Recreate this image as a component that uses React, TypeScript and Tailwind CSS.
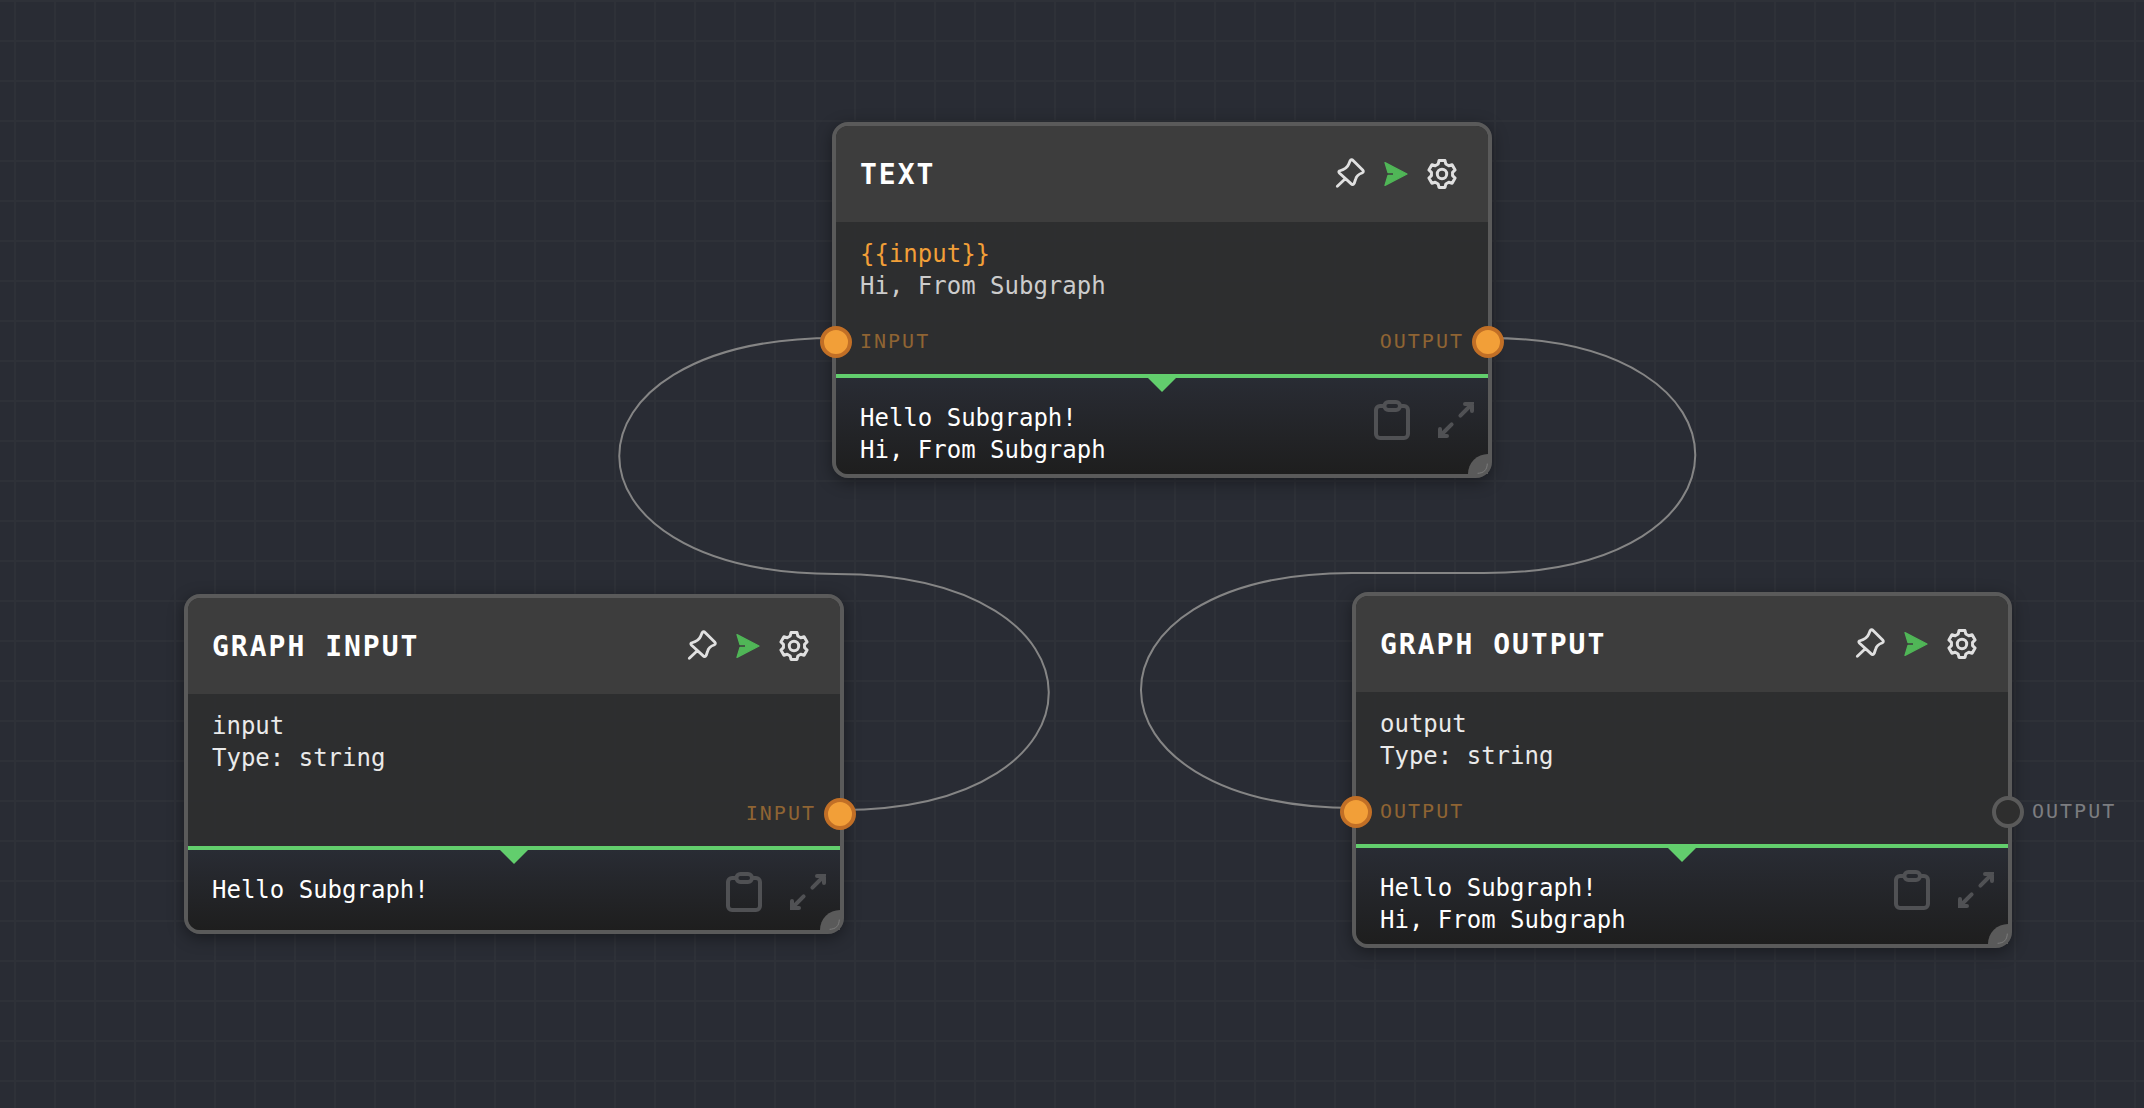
import React from "react";

type Line = { text: string; className: string };
type Port = { label: string; connected: boolean; outside?: boolean };
type NodeData = {
  id: string;
  title: string;
  place: string;
  body: Line[];
  input?: Port;
  output?: Port;
  result: string[];
};

const nodes: NodeData[] = [
  {
    id: "text",
    title: "Text",
    place: "left-[832px] top-[122px]",
    body: [
      { text: "{{input}}", className: "text-[#f29f38]" },
      { text: "Hi, From Subgraph", className: "text-[#cccccc]" },
    ],
    input: { label: "Input", connected: true },
    output: { label: "Output", connected: true },
    result: ["Hello Subgraph!", "Hi, From Subgraph"],
  },
  {
    id: "graph-input",
    title: "Graph Input",
    place: "left-[184px] top-[594px]",
    body: [
      { text: "input", className: "text-[#eaeaea]" },
      { text: "Type: string", className: "text-[#eaeaea]" },
    ],
    output: { label: "Input", connected: true },
    result: ["Hello Subgraph!"],
  },
  {
    id: "graph-output",
    title: "Graph Output",
    place: "left-[1352px] top-[592px]",
    body: [
      { text: "output", className: "text-[#eaeaea]" },
      { text: "Type: string", className: "text-[#eaeaea]" },
    ],
    input: { label: "Output", connected: true },
    output: { label: "Output", connected: false, outside: true },
    result: ["Hello Subgraph!", "Hi, From Subgraph"],
  },
];

const wires = [
  "M840 810C1119 810 1119 574 836 574C547 574 547 338 836 338",
  "M1488 338C1765 338 1765 573 1484 573H1352C1070 573 1070 808 1356 808",
];

function gearPath() {
  const tooth = [
    [-3.8, -10],
    [-3, -13.4],
    [3, -13.4],
    [3.8, -10],
  ];
  const points: string[] = [];
  for (let i = 0; i < 6; i++) {
    const a = (i * Math.PI) / 3;
    for (const [x, y] of tooth) {
      const px = 16 + x * Math.cos(a) - y * Math.sin(a);
      const py = 16 + x * Math.sin(a) + y * Math.cos(a);
      points.push(`${px.toFixed(2)} ${py.toFixed(2)}`);
    }
  }
  return `M${points.join("L")}Z`;
}

function PinIcon() {
  return (
    <svg viewBox="43 54 96 96" className="size-8" fill="none" stroke="currentColor" strokeWidth="8.5" strokeLinecap="round" strokeLinejoin="round">
      <path d="M53 139L76 117M59 93C70 90 83 84 87 73L91 63Q95 56 101 62L129 90Q134 96 127 99C115 103 111 107 108 117L104 129Q100 137 94 131L59 99Q56 95 59 93Z" />
    </svg>
  );
}

function SendIcon() {
  return (
    <svg viewBox="180 54 96 96" className="size-8" fill="currentColor" stroke="currentColor" strokeWidth="4" strokeLinejoin="round">
      <path d="M195 68L261 102L195 136L204 106H221V98H204Z" />
    </svg>
  );
}

function GearIcon() {
  return (
    <svg viewBox="0 0 32 32" className="size-8" fill="none" stroke="currentColor" strokeWidth="3" strokeLinejoin="round">
      <path d={gearPath()} />
      <circle cx="16" cy="16" r="4.7" />
    </svg>
  );
}

function ClipboardIcon() {
  return (
    <svg viewBox="0 0 24 24" className="size-12" fill="none" stroke="currentColor" strokeWidth="2" strokeLinejoin="round">
      <path d="M8.2 5H6a2 2 0 0 0-2 2V19a2 2 0 0 0 2 2H18a2 2 0 0 0 2-2V7a2 2 0 0 0-2-2H15.8" />
      <rect x="8.2" y="3" width="7.8" height="4" rx="2" />
    </svg>
  );
}

function ExpandIcon() {
  return (
    <svg viewBox="0 0 24 24" className="size-12" fill="none" stroke="currentColor" strokeWidth="2" strokeLinecap="round" strokeLinejoin="miter">
      <path d="M16.5 4H20V7.5M20 4L14.2 9.8M4 16.5V20H7.5M4 20L9.8 14.2" />
    </svg>
  );
}

function ResizeHandle() {
  return (
    <span className="absolute right-0 bottom-0 size-5 cursor-se-resize rounded-tl-full rounded-br-xl bg-[#5a5a5a]">
      <svg viewBox="0 0 20 20" className="size-5" fill="none" stroke="#7c7c7c" strokeWidth="1" strokeLinecap="round">
        <path d="M10 19.3C16 19 19 16 19.3 10" />
      </svg>
    </span>
  );
}

function PortDot({ connected, label }: { connected: boolean; label: string }) {
  return (
    <button
      type="button"
      aria-label={label}
      className={
        connected
          ? "size-8 shrink-0 rounded-full border-4 border-[#c16f26] bg-[#f29f38]"
          : "size-8 shrink-0 rounded-full border-4 border-[#5a5a5a] bg-[#2e2e2e]"
      }
    />
  );
}

function NodeCard({ node }: { node: NodeData }) {
  return (
    <article
      className={`absolute w-[660px] rounded-2xl border-4 border-[#5a5a5a] bg-[#2d2e2f]/95 shadow-[0_4px_16px_rgba(0,0,0,0.4)] ${node.place}`}
    >
      <header className="flex h-24 items-center rounded-t-xl bg-[#3d3d3d] pr-[30px] pl-6">
        <h2 className="flex-1 pt-0.5 text-[28px] leading-8 font-bold tracking-[2px] text-white uppercase">{node.title}</h2>
        <div className="flex gap-3.5 text-[#e0e0e0]">
          <button type="button" aria-label="Pin node"><PinIcon /></button>
          <button type="button" aria-label="Run to here" className="text-[#50b657]"><SendIcon /></button>
          <button type="button" aria-label="Node settings"><GearIcon /></button>
        </div>
      </header>

      <div className="pt-4 pb-4">
        <div className="px-6 text-2xl leading-8 whitespace-pre">
          {node.body.map((line) => (
            <p key={line.text} className={line.className}>{line.text}</p>
          ))}
        </div>
        <div className="-mx-4 mt-6 flex h-8 items-center gap-2 text-xl leading-[30px] tracking-[2px] text-[#8f6433] uppercase">
          {node.input && (
            <>
              <PortDot connected={node.input.connected} label={`${node.input.label} in`} />
              <span className="pb-0.5">{node.input.label}</span>
            </>
          )}
          <span className="flex-1" />
          {node.output && !node.output.outside && <span className="pb-0.5">{node.output.label}</span>}
          {node.output && (
            <span className="relative flex">
              <PortDot connected={node.output.connected} label={`${node.output.label} out`} />
              {node.output.outside && (
                <span className="absolute left-full ml-2 text-[#7c7d80]">{node.output.label}</span>
              )}
            </span>
          )}
        </div>
      </div>

      <section className="relative min-h-[84px] rounded-b-xl border-t-4 border-[#62ce6d] bg-linear-to-b from-[#292c34] to-[#1e1e1e] px-6 pt-6 pb-2 text-2xl leading-8 text-white">
        <span className="absolute top-0 left-1/2 h-3.5 w-7 -translate-x-1/2 bg-[#62ce6d] [clip-path:polygon(0_0,100%_0,50%_100%)]" />
        {node.result.map((line) => (
          <p key={line}>{line}</p>
        ))}
        <div className="absolute top-[18px] right-2 flex gap-4 text-[#505154]">
          <button type="button" aria-label="Copy output"><ClipboardIcon /></button>
          <button type="button" aria-label="Expand output"><ExpandIcon /></button>
        </div>
        <ResizeHandle />
      </section>
    </article>
  );
}

export default function App() {
  return (
    <main className="relative min-h-screen w-full overflow-hidden bg-[#292c34] bg-[linear-gradient(to_right,#2e3138_2px,transparent_2px),linear-gradient(to_bottom,#2e3138_2px,transparent_2px)] bg-size-[40px_40px] bg-position-[14px_0px] font-['DejaVu_Sans_Mono',monospace]">
      <svg className="pointer-events-none absolute top-0 left-0 h-full w-full" fill="none" stroke="#858585" strokeWidth="2">
        {wires.map((d) => (
          <path key={d} d={d} />
        ))}
      </svg>
      {nodes.map((node) => (
        <NodeCard key={node.id} node={node} />
      ))}
    </main>
  );
}
